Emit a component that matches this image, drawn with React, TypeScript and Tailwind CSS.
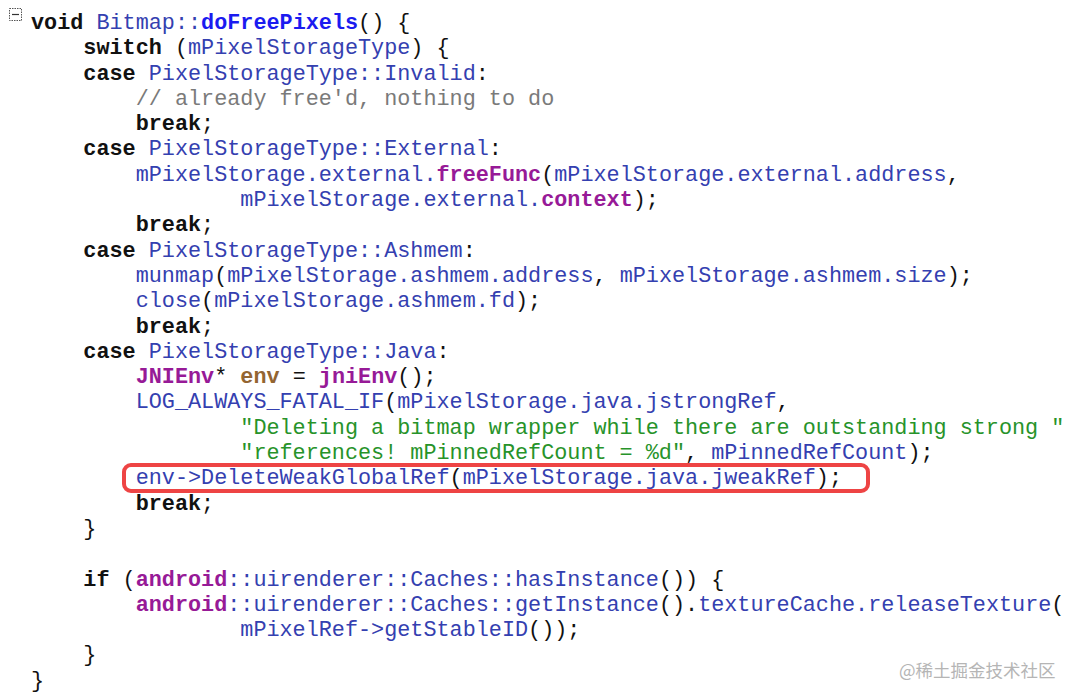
type Kind = 'k' | 'b' | 'f' | 'p' | 'v' | 's' | 'c' | 'd';
type Tok = [string, Kind];

const kindClass: Record<Kind, string> = {
  k: 'font-bold text-[#111111]',
  b: 'text-[#3440b0]',
  f: 'font-bold text-[#1b1bf0]',
  p: 'font-bold text-[#971a97]',
  v: 'font-bold text-[#936531]',
  s: 'text-[#27932a]',
  c: 'text-[#7a7a7a]',
  d: 'text-[#111111]',
};

const lines: Tok[][] = [
  [['void', 'k'], [' ', 'd'], ['Bitmap::', 'b'], ['doFreePixels', 'f'], ['() {', 'd']],
  [['    ', 'd'], ['switch', 'k'], [' (', 'd'], ['mPixelStorageType', 'b'], [') {', 'd']],
  [['    ', 'd'], ['case', 'k'], [' ', 'd'], ['PixelStorageType::Invalid', 'b'], [':', 'd']],
  [['        ', 'd'], ["// already free'd, nothing to do", 'c']],
  [['        ', 'd'], ['break', 'k'], [';', 'd']],
  [['    ', 'd'], ['case', 'k'], [' ', 'd'], ['PixelStorageType::External', 'b'], [':', 'd']],
  [
    ['        ', 'd'],
    ['mPixelStorage.external.', 'b'],
    ['freeFunc', 'p'],
    ['(', 'd'],
    ['mPixelStorage.external.address', 'b'],
    [',', 'd'],
  ],
  [['                ', 'd'], ['mPixelStorage.external.', 'b'], ['context', 'p'], [');', 'd']],
  [['        ', 'd'], ['break', 'k'], [';', 'd']],
  [['    ', 'd'], ['case', 'k'], [' ', 'd'], ['PixelStorageType::Ashmem', 'b'], [':', 'd']],
  [
    ['        ', 'd'],
    ['munmap', 'b'],
    ['(', 'd'],
    ['mPixelStorage.ashmem.address', 'b'],
    [', ', 'd'],
    ['mPixelStorage.ashmem.size', 'b'],
    [');', 'd'],
  ],
  [['        ', 'd'], ['close', 'b'], ['(', 'd'], ['mPixelStorage.ashmem.fd', 'b'], [');', 'd']],
  [['        ', 'd'], ['break', 'k'], [';', 'd']],
  [['    ', 'd'], ['case', 'k'], [' ', 'd'], ['PixelStorageType::Java', 'b'], [':', 'd']],
  [
    ['        ', 'd'],
    ['JNIEnv', 'p'],
    ['* ', 'd'],
    ['env', 'v'],
    [' = ', 'd'],
    ['jniEnv', 'p'],
    ['();', 'd'],
  ],
  [['        ', 'd'], ['LOG_ALWAYS_FATAL_IF', 'b'], ['(', 'd'], ['mPixelStorage.java.jstrongRef', 'b'], [',', 'd']],
  [['                ', 'd'], ['"Deleting a bitmap wrapper while there are outstanding strong "', 's']],
  [
    ['                ', 'd'],
    ['"references! mPinnedRefCount = %d"', 's'],
    [', ', 'd'],
    ['mPinnedRefCount', 'b'],
    [');', 'd'],
  ],
  [],
  [['        ', 'd'], ['break', 'k'], [';', 'd']],
  [['    ', 'd'], ['}', 'd']],
  [],
  [
    ['    ', 'd'],
    ['if', 'k'],
    [' (', 'd'],
    ['android', 'p'],
    ['::uirenderer::Caches::hasInstance', 'b'],
    ['()) {', 'd'],
  ],
  [
    ['        ', 'd'],
    ['android', 'p'],
    ['::uirenderer::Caches::getInstance', 'b'],
    ['().', 'd'],
    ['textureCache.releaseTexture', 'b'],
    ['(', 'd'],
  ],
  [['                ', 'd'], ['mPixelRef->getStableID', 'b'], ['());', 'd']],
  [['    ', 'd'], ['}', 'd']],
  [['}', 'd']],
];

// line 19 gets the red highlight box
const highlighted: Tok[] = [
  ['env->DeleteWeakGlobalRef', 'b'],
  ['(', 'd'],
  ['mPixelStorage.java.jweakRef', 'b'],
  [');', 'd'],
];

function CollapseIcon() {
  return (
    <svg width="14" height="14" viewBox="0 0 14 14" className="-mt-[4px]">
      <rect x="0.5" y="0.5" width="12" height="12" fill="none" stroke="#555" strokeDasharray="1.5 1" />
      <line x1="3" y1="6.5" x2="10" y2="6.5" stroke="#333" strokeWidth="1.2" />
    </svg>
  );
}

function Tokens({ toks }: { toks: Tok[] }) {
  return (
    <>
      {toks.map(([text, kind], i) => (
        <span key={i} className={kindClass[kind]}>
          {text}
        </span>
      ))}
    </>
  );
}

export default function App() {
  return (
    <div className="relative h-[697px] w-[1080px] overflow-hidden bg-white pt-[11px]">
      <div className="font-['Liberation_Mono','Courier_New',monospace] text-[21.8px] leading-[25.3px] whitespace-pre">
        {lines.map((toks, i) => (
          <div key={i} className="flex h-[25.3px]">
            <div className="flex w-[31px] shrink-0 justify-start pl-[9px] pt-[1px]">
              {i === 0 && <CollapseIcon />}
            </div>
            <div>
              {i === 18 ? (
                <>
                  <span>{'        '}</span>
                  <span className="relative inline-block">
                    <span className="pointer-events-none absolute -top-[3px] -right-[28px] -bottom-[1px] -left-[14px] rounded-[9px] border-[4px] border-[#ee4444]" />
                    <Tokens toks={highlighted} />
                  </span>
                </>
              ) : (
                <Tokens toks={toks} />
              )}
            </div>
          </div>
        ))}
      </div>
      <div className="absolute top-[658px] left-[899px] font-['Noto_Sans_CJK_SC',sans-serif] text-[17.5px] leading-[24px] text-[#b5b5b5]">
        @稀土掘金技术社区
      </div>
    </div>
  );
}
